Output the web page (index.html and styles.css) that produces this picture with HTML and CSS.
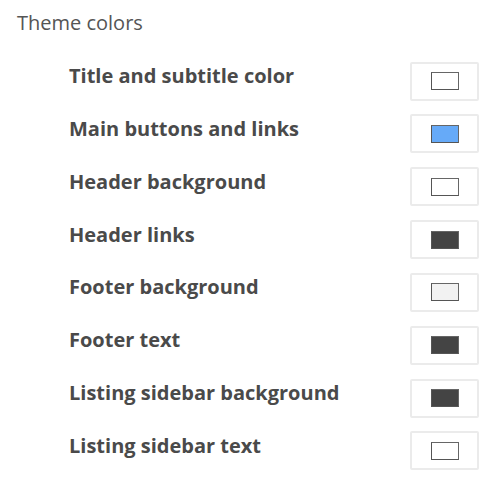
FILE: index.html
```html
<!DOCTYPE html>
<html>
<head>
<meta charset="utf-8">
<link rel="stylesheet" href="styles.css">
</head>
<body>
<div class="panel">
  <h2 class="title">Theme colors</h2>
  <div class="rows">
    <div class="row"><span class="label">Title and subtitle color</span><span class="picker"><span class="swatch sw-white"></span></span></div>
    <div class="row"><span class="label">Main buttons and links</span><span class="picker"><span class="swatch sw-blue"></span></span></div>
    <div class="row"><span class="label">Header background</span><span class="picker"><span class="swatch sw-white"></span></span></div>
    <div class="row"><span class="label">Header links</span><span class="picker"><span class="swatch sw-dark"></span></span></div>
    <div class="row"><span class="label">Footer background</span><span class="picker"><span class="swatch sw-light"></span></span></div>
    <div class="row"><span class="label">Footer text</span><span class="picker"><span class="swatch sw-dark"></span></span></div>
    <div class="row"><span class="label">Listing sidebar background</span><span class="picker"><span class="swatch sw-dark"></span></span></div>
    <div class="row"><span class="label">Listing sidebar text</span><span class="picker"><span class="swatch sw-white"></span></span></div>
  </div>
</div>
</body>
</html>
```
FILE: styles.css
```css
html, body {
  margin: 0;
  padding: 0;
  background: #ffffff;
}
body {
  font-family: "Open Sans", "Liberation Sans", sans-serif;
  color: #4a4a4a;
}
.panel {
  padding: 8.5px 0 0 17px;
}
.title {
  margin: 0;
  font-size: 20px;
  font-weight: 400;
  color: #555555;
  line-height: 28px;
}
.rows {
  display: flex;
  flex-direction: column;
  padding: 24px 0 0 52px;
}
.row {
  display: flex;
  align-items: flex-start;
  justify-content: space-between;
  height: 52.85px;
  width: 410px;
}
.label {
  font-size: 20px;
  font-weight: 700;
  color: #4a4a4a;
  line-height: 26px;
  margin-top: 2.5px;
}
.picker {
  box-sizing: border-box;
  width: 69px;
  height: 39px;
  border: 2px solid #ebebeb;
  border-radius: 2px;
  display: flex;
  align-items: center;
  justify-content: center;
  margin-top: 1px;
}
.swatch {
  box-sizing: border-box;
  width: 28px;
  height: 18px;
  border: 1px solid #666666;
  border-bottom-color: #555555;
  border-left-color: #555555;
}
.sw-white { background: #ffffff; }
.sw-blue { background: #66aaf8; }
.sw-dark { background: #444444; }
.sw-light { background: #f2f2f2; }
```
